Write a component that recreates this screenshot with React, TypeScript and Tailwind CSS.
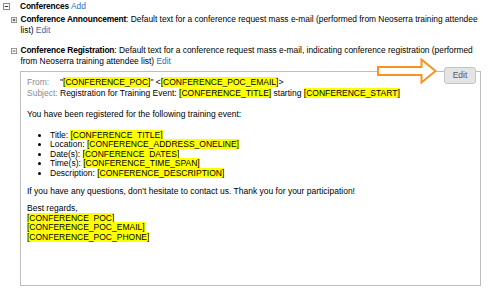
import React from "react";

function Toggle({ open, size = 7 }: { open: boolean; size?: number }) {
  return (
    <svg width={size} height={size} viewBox="0 0 7 7" className="shrink-0">
      <rect x="0.5" y="0.5" width="6" height="6" fill="#fff" stroke="#8a8a8a" />
      <line x1="1.8" y1="3.5" x2="5.2" y2="3.5" stroke="#333" strokeWidth="1" />
      {!open && <line x1="3.5" y1="1.8" x2="3.5" y2="5.2" stroke="#333" strokeWidth="1" />}
    </svg>
  );
}

function Tag({ children }: { children: React.ReactNode }) {
  return <span className="bg-[#ffff00]">{children}</span>;
}

function Arrow() {
  // orange outlined callout arrow pointing at the Edit button
  return (
    <svg width="64" height="28" viewBox="0 0 64 28" className="absolute left-[-68px] top-[-9px]">
      <polygon
        points="2,9 45.5,9 45.5,1.5 59.5,13 45.5,24.5 45.5,17 2,17"
        fill="#fff"
        stroke="#f7931e"
        strokeWidth="2"
        strokeLinejoin="miter"
      />
    </svg>
  );
}

export default function App() {
  return (
    <div className="w-[498px] h-[292px] bg-white text-black text-[8.5px] font-['Liberation_Sans',Arial,sans-serif] overflow-hidden">
      <div className="flex items-center gap-[10px] pl-[3px] pt-[1px] leading-[10px]">
        <Toggle open />
        <div className="text-[8.4px]">
          <b className="tracking-[-0.15px]">Conferences</b> <span className="text-[#2f6db5]">Add</span>
        </div>
      </div>

      <div className="flex gap-[3.5px] pl-[11px] mt-[3px] leading-[10.5px] text-[8.4px]">
        <div className="pt-[2.5px]">
          <Toggle open={false} size={6} />
        </div>
        <div className="w-[465px]">
          <b className="tracking-[-0.15px]">Conference Announcement</b>: Default text for a conference request mass
          e-mail (performed from Neoserra training attendee list) <span className="text-[#2f6db5]">Edit</span>
        </div>
      </div>

      <div className="flex gap-[3.5px] pl-[11px] mt-[10px] leading-[10.5px] text-[8.4px]">
        <div className="pt-[2.5px]">
          <Toggle open size={6} />
        </div>
        <div className="w-[465px]">
          <b className="tracking-[-0.15px]">Conference Registration</b>: Default text for a conference request mass
          e-mail, indicating conference registration (performed from Neoserra training attendee list){" "}
          <span className="text-[#2f6db5]">Edit</span>
        </div>
      </div>

      <div className="relative ml-[20px] mt-[5px] w-[461px] h-[215px] border border-[#bdbdbd] px-[6px] pt-[5.5px] leading-[9.6px]">
        <div className="absolute right-[4px] top-[-5px]">
          <Arrow />
          <button className="w-[32px] h-[17px] rounded-[3px] border border-[#c4c4c4] bg-[#e4e4e4] text-[#555] text-[8.5px] leading-[15px]">
            Edit
          </button>
        </div>

        <div className="grid grid-cols-[33px_1fr] gap-y-[2px] leading-[9.7px]">
          <div className="text-[#8c8c8c]">From:</div>
          <div>
            "<Tag>[CONFERENCE_POC]</Tag>" &lt;<Tag>[CONFERENCE_POC_EMAIL]</Tag>&gt;
          </div>
          <div className="text-[#8c8c8c]">Subject:</div>
          <div>
            Registration for Training Event: <Tag>[CONFERENCE_TITLE]</Tag> starting <Tag>[CONFERENCE_START]</Tag>
          </div>
        </div>

        <p className="mt-[11px]">You have been registered for the following training event:</p>
        <ul className="list-disc pl-[23px] mt-[11px]">
          <li>
            Title: <Tag>[CONFERENCE_TITLE]</Tag>
          </li>
          <li>
            Location: <Tag>[CONFERENCE_ADDRESS_ONELINE]</Tag>
          </li>
          <li>
            Date(s): <Tag>[CONFERENCE_DATES]</Tag>
          </li>
          <li>
            Time(s): <Tag>[CONFERENCE_TIME_SPAN]</Tag>
          </li>
          <li>
            Description: <Tag>[CONFERENCE_DESCRIPTION]</Tag>
          </li>
        </ul>
        <p className="mt-[9px]">If you have any questions, don't hesitate to contact us. Thank you for your participation!</p>
        <div className="mt-[7px]">
          <div>Best regards,</div>
          <div>
            <Tag>[CONFERENCE_POC]</Tag>
          </div>
          <div>
            <Tag>[CONFERENCE_POC_EMAIL]</Tag>
          </div>
          <div>
            <Tag>[CONFERENCE_POC_PHONE]</Tag>
          </div>
        </div>
      </div>
    </div>
  );
}
